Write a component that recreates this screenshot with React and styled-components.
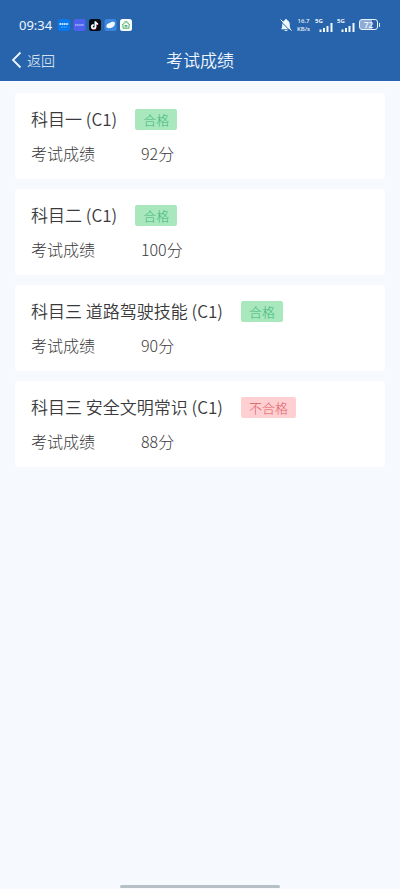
import styled, { createGlobalStyle } from "styled-components";

const GlobalStyle = createGlobalStyle`
  * {
    box-sizing: border-box;
  }

  body {
    margin: 0;
    background: #f6faff;
    color: #3a3a3c;
    font-family: "Noto Sans CJK SC", "Noto Sans", sans-serif;
    font-weight: 300;
  }
`;

const Page = styled.div`
  min-height: 100vh;
  display: flex;
  flex-direction: column;
`;

const Header = styled.header`
  padding-bottom: 2px;
  background: #2864ab;
  color: #eff6fd;
`;

const StatusBar = styled.div`
  height: 40px;
  padding: 9px 20px 0 19px;
  display: flex;
  justify-content: space-between;
  align-items: center;
`;

const StatusGroup = styled.div`
  display: flex;
  align-items: center;
  gap: 4px;
`;

const Clock = styled.time`
  margin-right: 2px;
  font-family: "Noto Sans", sans-serif;
  font-size: 13px;
  font-weight: 400;
  line-height: 16px;
`;

const Speed = styled.div`
  width: 15px;
  display: flex;
  flex-direction: column;
  align-items: center;
  font-family: "Noto Sans", sans-serif;
  font-size: 6px;
  font-weight: 500;
  line-height: 8px;
  white-space: nowrap;
`;

const NavBar = styled.nav`
  height: 39px;
  padding: 0 11px;
  display: grid;
  grid-template-columns: 1fr auto 1fr;
  align-items: center;
`;

const BackButton = styled.button`
  justify-self: start;
  padding: 0;
  display: flex;
  align-items: center;
  gap: 5px;
  border: 0;
  background: none;
  color: inherit;
  font: inherit;
  font-size: 14px;
  line-height: 20px;
  cursor: pointer;
`;

const Title = styled.h1`
  margin: 0;
  font-size: 17px;
  font-weight: 350;
  line-height: 24px;
`;

const List = styled.main`
  padding: 12px 15px;
  display: flex;
  flex-direction: column;
  gap: 10px;
`;

const Card = styled.section`
  padding: 14px 16px;
  border-radius: 4px;
  background: #fff;
`;

const CardHead = styled.div`
  display: flex;
  align-items: center;
  gap: 18px;
`;

const Subject = styled.h2`
  margin: 0;
  font-size: 17px;
  font-weight: 350;
  line-height: 24px;
`;

const Tag = styled.span`
  padding: 0 8px;
  border-radius: 2px;
  background: ${({ $passed }) => ($passed ? "#a8e8bc" : "#ffcfd2")};
  color: ${({ $passed }) => ($passed ? "#3fb67a" : "#e0595d")};
  font-size: 13px;
  line-height: 21px;
`;

const Result = styled.dl`
  margin: 10px 0 0;
  display: grid;
  grid-template-columns: 110px 1fr;
  font-size: 16px;
  line-height: 24px;
`;

const Label = styled.dt``;

const Score = styled.dd`
  margin: 0;
`;

const HomeIndicator = styled.div`
  width: 40%;
  height: 3px;
  margin: auto auto 1px;
  border-radius: 2px;
  background: #b8c0c7;
`;

const exams = [
  { subject: "科目一 (C1)", score: 92, passed: true },
  { subject: "科目二 (C1)", score: 100, passed: true },
  { subject: "科目三 道路驾驶技能 (C1)", score: 90, passed: true },
  { subject: "科目三 安全文明常识 (C1)", score: 88, passed: false },
];

const AppIcons = () => (
  <svg width="74" height="12" viewBox="0 0 74 12" aria-hidden="true">
    <rect width="12" height="12" rx="2.5" fill="#0878ee" />
    <path d="M1.5 5h9" stroke="#c3e2ff" strokeWidth="2" strokeDasharray="1.7 .5" />
    <path d="M3 8h6" stroke="#4fa7ff" strokeDasharray="2 .6" />

    <rect x="15.5" width="12" height="12" rx="2.5" fill="#4c62ec" />
    <path d="M17 6h9" stroke="#aeb9ff" strokeWidth="1.6" strokeDasharray="1.6 .5" />

    <rect x="31" width="12" height="12" rx="2.5" fill="#050a12" />
    <g fill="none" strokeWidth="1.5">
      <path d="M37.2 2.3v5.2a1.8 1.8 0 1 1-1.8-1.8M37.2 2.5c.2 1.5 1.2 2.2 2.5 2.3" stroke="#39dfe0" />
      <path d="M37.8 2.7v5.2A1.8 1.8 0 1 1 36 6.1M37.8 2.9c.2 1.5 1.2 2.2 2.5 2.3" stroke="#f7496f" />
      <path d="M37.5 2.5v5.2a1.8 1.8 0 1 1-1.8-1.8M37.5 2.7c.2 1.5 1.2 2.2 2.5 2.3" stroke="#fff" />
    </g>

    <rect x="46.5" width="12" height="12" rx="2.5" fill="#3985e0" />
    <path d="M48.5 8.3c-.6-2.5 1.1-4 3.2-4.2 1.5-1.5 4-1.9 5-.9.8 1.5-.2 4.3-2.5 5.2-2 .9-4.8 1.2-5.7-.1z" fill="#f3f9ff" />

    <rect x="62" width="12" height="12" rx="2.5" fill="#f8fdfa" />
    <g fill="none" stroke="#42a568" strokeWidth=".9">
      <path d="M64 6l4-3.3L72 6M65 5.8v3.4h6V5.8" />
      <path d="M66.6 6.5h2.8M66.6 7.8h2.8" />
      <path d="M66 3a3.5 3.5 0 0 1 4.5.4" stroke="#8ac7a0" />
    </g>
  </svg>
);

const MutedBell = () => (
  <svg width="12" height="14" viewBox="0 0 12 14" aria-label="静音">
    <path
      d="M1 11.2c1-1 1.2-2 1.2-4.7C2.2 4 3.8 2.4 5.2 2.1V1h1.6v1.1C8.4 2.5 9.8 4 9.8 6.5s.2 3.7 1.2 4.7z"
      fill="#f0f7ff"
    />
    <path d="M4.3 12h3.4c-.3 1.3-3.1 1.3-3.4 0z" fill="#f0f7ff" />
    <path d="M0 2.6l11 11" stroke="#2864ab" strokeWidth="1" />
    <path d="M.6 1.6l11 11" stroke="#f0f7ff" strokeWidth="1" />
  </svg>
);

const SignalBox = styled.div`
  width: 18px;
  height: 14px;
  display: grid;
  grid-template-areas: "stack";
  font-family: "Noto Sans", sans-serif;
  font-size: 6px;
  font-weight: 700;
  line-height: 6px;

  > * {
    grid-area: stack;
  }

  svg {
    align-self: end;
    justify-self: end;
  }
`;

const Signal = () => (
  <SignalBox>
    <span>5G</span>
    <svg width="14" height="9" viewBox="0 0 14 9" aria-hidden="true">
      <path d="M1.5 9V6.5M5 9V5M8.5 9V3M12.5 9V0" stroke="#f0f7ff" strokeWidth="2" />
    </svg>
  </SignalBox>
);

const BatteryShell = styled.div`
  display: flex;
  align-items: center;
  gap: 1px;

  &::after {
    content: "";
    width: 1px;
    height: 4px;
    background: #dce9f7;
  }
`;

const BatteryLevel = styled.div`
  width: 19px;
  height: 11px;
  border: 1px solid #eaf3fd;
  border-radius: 3px;
  background: linear-gradient(90deg, #8dabd5 72%, transparent 72%);
  font-family: "Noto Sans", sans-serif;
  font-size: 8px;
  font-weight: 600;
  line-height: 9px;
  text-align: center;
`;

function App() {
  return (
    <Page>
      <GlobalStyle />
      <Header>
        <StatusBar>
          <StatusGroup>
            <Clock>09:34</Clock>
            <AppIcons />
          </StatusGroup>
          <StatusGroup>
            <MutedBell />
            <Speed>
              <span>16.7</span>
              <span>KB/s</span>
            </Speed>
            <Signal />
            <Signal />
            <BatteryShell>
              <BatteryLevel>72</BatteryLevel>
            </BatteryShell>
          </StatusGroup>
        </StatusBar>
        <NavBar>
          <BackButton type="button">
            <svg width="11" height="18" viewBox="0 0 11 18" aria-hidden="true">
              <path d="M9.5 1.5L2 9l7.5 7.5" fill="none" stroke="currentColor" strokeWidth="1.8" />
            </svg>
            返回
          </BackButton>
          <Title>考试成绩</Title>
        </NavBar>
      </Header>

      <List>
        {exams.map(({ subject, score, passed }) => (
          <Card key={subject}>
            <CardHead>
              <Subject>{subject}</Subject>
              <Tag $passed={passed}>{passed ? "合格" : "不合格"}</Tag>
            </CardHead>
            <Result>
              <Label>考试成绩</Label>
              <Score>{score}分</Score>
            </Result>
          </Card>
        ))}
      </List>

      <HomeIndicator />
    </Page>
  );
}

export default App;
